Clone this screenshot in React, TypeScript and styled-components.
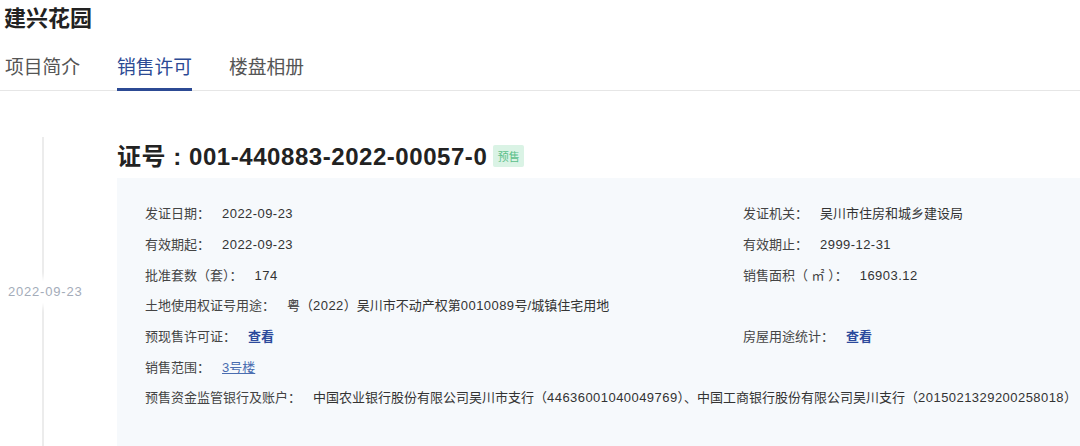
import React from "react";
import styled, { createGlobalStyle } from "styled-components";

const GlobalStyle = createGlobalStyle`
  html, body {
    margin: 0;
    padding: 0;
    background: #ffffff;
    font-family: "Liberation Sans", "Noto Sans CJK SC", sans-serif;
    color: #333333;
    overflow: hidden;
  }
`;

const tabs = ["项目简介", "销售许可", "楼盘相册"];

type Field = {
  label: string;
  value: React.ReactNode;
  wide?: boolean;
};

const App = () => {
  const fields: Field[] = [
    { label: "发证日期：", value: <Num>2022-09-23</Num> },
    { label: "发证机关：", value: "吴川市住房和城乡建设局" },
    { label: "有效期起：", value: <Num>2022-09-23</Num> },
    { label: "有效期止：", value: <Num>2999-12-31</Num> },
    { label: "批准套数（套）：", value: <Num>174</Num> },
    { label: "销售面积（ ㎡ ）：", value: <Num>16903.12</Num> },
    {
      label: "土地使用权证号用途：",
      value: (
        <>
          粤（<Num>2022</Num>）吴川市不动产权第<Num>0010089</Num>号/城镇住宅用地
        </>
      ),
      wide: true,
    },
  ];

  return (
    <Page>
      <GlobalStyle />
      <Title>建兴花园</Title>
      <TabBar>
        {tabs.map((tab, index) => (
          <Tab key={tab} $active={index === 1}>
            {tab}
          </Tab>
        ))}
      </TabBar>
      <Body>
        <Timeline>
          <DateLabel>2022-09-23</DateLabel>
        </Timeline>
        <Content>
          <Heading>
            证号 : 001-440883-2022-00057-0
            <Badge>预售</Badge>
          </Heading>
          <Panel>
            {fields.map((field) => (
              <Row key={field.label} $wide={field.wide}>
                <Label>{field.label}</Label>
                <Value>{field.value}</Value>
              </Row>
            ))}
            <Row>
              <Label>预现售许可证：</Label>
              <Link>查看</Link>
            </Row>
            <Row>
              <Label>房屋用途统计：</Label>
              <Link>查看</Link>
            </Row>
            <Row $wide>
              <Label>销售范围：</Label>
              <Underline>3号楼</Underline>
            </Row>
            <Row $wide>
              <Label>预售资金监管银行及账户：</Label>
              <Value>
                中国农业银行股份有限公司吴川市支行（<Num>44636001040049769</Num>）、中国工商银行股份有限公司吴川支行（<Num>2015021329200258018</Num>）
              </Value>
            </Row>
          </Panel>
        </Content>
      </Body>
    </Page>
  );
};

export default App;

const Page = styled.div`
  width: 1080px;
  height: 446px;
  display: flex;
  flex-direction: column;
`;

const Title = styled.h1`
  margin: 4px 0 0 4px;
  font-size: 22px;
  line-height: 30px;
  font-weight: 700;
  color: #222222;
`;

const TabBar = styled.div`
  display: flex;
  gap: 37px;
  margin-top: 22px;
  padding-left: 5px;
  border-bottom: 1px solid #e6e6e6;
`;

const Tab = styled.div<{ $active: boolean }>`
  font-size: 18.75px;
  line-height: 24px;
  padding-bottom: 8px;
  color: ${({ $active }) => ($active ? "#2c4a94" : "#555555")};
  border-bottom: 3px solid
    ${({ $active }) => ($active ? "#2c4a94" : "transparent")};
  margin-bottom: -1px;
`;

const Body = styled.div`
  flex: 1;
  display: flex;
  margin-top: 46px;
`;

const Timeline = styled.div`
  position: relative;
  width: 117px;
  flex-shrink: 0;
  &::before {
    content: "";
    position: absolute;
    left: 42px;
    top: 0;
    bottom: 0;
    width: 2px;
    background: #ececec;
  }
`;

const DateLabel = styled.div`
  position: absolute;
  left: 6px;
  top: 144px;
  padding: 2px 2px;
  background: #ffffff;
  box-shadow: 0 0 6px 4px #ffffff;
  font-size: 13px;
  line-height: 18px;
  letter-spacing: 0.8px;
  color: #a4acb9;
`;

const Content = styled.div`
  flex: 1;
  display: flex;
  flex-direction: column;
`;

const Heading = styled.div`
  display: flex;
  align-items: center;
  gap: 6px;
  height: 35px;
  font-size: 24px;
  font-weight: 700;
  letter-spacing: 0.55px;
  color: #222222;
  white-space: pre;
`;

const Badge = styled.span`
  display: inline-flex;
  align-items: center;
  justify-content: center;
  width: 31px;
  height: 22px;
  margin-top: 2px;
  background: #daf3e5;
  color: #5cc08a;
  font-size: 11px;
  font-weight: 400;
  letter-spacing: 0;
  border-radius: 2px;
`;

const Panel = styled.div`
  flex: 1;
  margin-top: 6px;
  background: #f6f9fc;
  padding: 21px 0 0 28px;
  display: grid;
  grid-template-columns: 598px 1fr;
  grid-auto-rows: 30.7px;
  align-items: center;
  align-content: start;
`;

const Row = styled.div<{ $wide?: boolean }>`
  display: flex;
  align-items: center;
  white-space: nowrap;
  font-size: 13px;
  line-height: 18px;
  ${({ $wide }) => ($wide ? "grid-column: 1 / -1;" : "")}
`;

const Label = styled.span`
  color: #444444;
  white-space: pre;
`;

const Value = styled.span`
  margin-left: 12px;
  color: #333333;
`;

const Num = styled.span`
  letter-spacing: 0.45px;
`;

const Link = styled.span`
  margin-left: 12px;
  color: #2c4a9c;
  font-weight: 700;
`;

const Underline = styled.span`
  margin-left: 12px;
  color: #4a6db0;
  text-decoration: underline;
`;
